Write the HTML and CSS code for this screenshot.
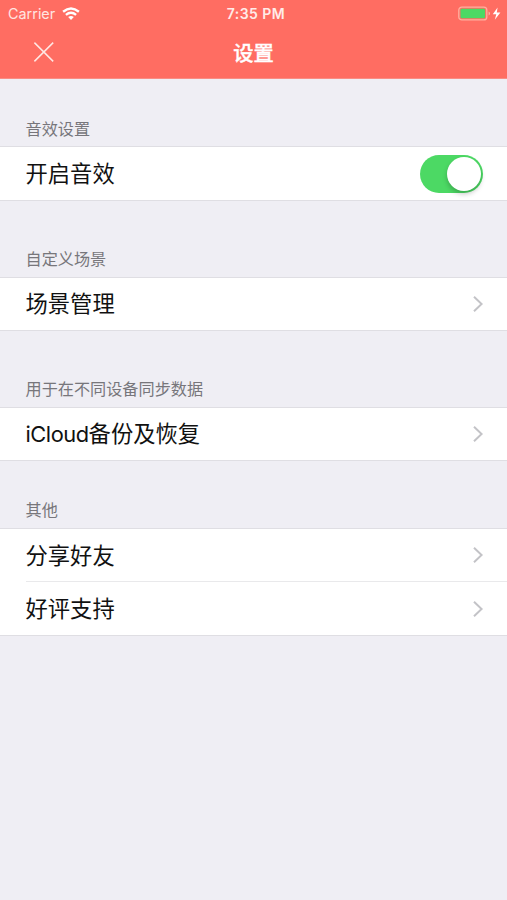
FILE: index.html
```html
<!DOCTYPE html>
<html lang="zh-CN">
<head>
<meta charset="utf-8">
<title>设置</title>
<link rel="stylesheet" href="styles.css">
</head>
<body>
<header class="header">
  <div class="status">
    <div class="carrier"><span class="carrier-name">Carrier</span>
      <svg class="wifi" width="18" height="14" viewBox="0 0 18 14" fill="none" stroke="#fff" stroke-width="2.4"><path d="M1.1 4.7Q9-1.7 16.9 4.7"/><path d="M3.9 7.9Q9 3.8 14.1 7.9"/><path d="M9 13 6.2 10.1Q9 7.9 11.8 10.1Z" fill="#fff" stroke="none"/></svg>
    </div>
    <time class="clock">7:35 PM</time>
    <svg class="battery" width="44" height="16" viewBox="0 0 44 16"><rect x=".8" y="1.1" width="28" height="12.8" rx="3" fill="none" stroke="#ffb09f" stroke-width="1.3"/><rect x="2.5" y="2.7" width="24.6" height="9.6" rx="1.3" fill="#4cd964"/><path d="M30.6 5.5Q32 6 32 7.5T30.6 9.5Z" fill="#ffb3a9"/><path d="M39.6 1.4 34.8 8.2H38.3L36.8 13.8 42.4 6.5H38.8Z" fill="#fff"/></svg>
  </div>
  <nav class="navbar">
    <svg class="close" width="22" height="22" viewBox="0 0 22 22" fill="none" stroke="#ffe7e3" stroke-width="1.5"><path d="M1.4 .6 20.2 19.4M20.2 .6 1.4 19.4"/></svg>
    <h1 class="title">设置</h1>
  </nav>
</header>
<main>
  <section class="section first">
    <h2 class="label">音效设置</h2>
    <div class="group"><div class="row"><span>开启音效</span><div class="switch"><div class="knob"></div></div></div></div>
  </section>
  <section class="section second">
    <h2 class="label">自定义场景</h2>
    <div class="group"><div class="row"><span>场景管理</span><svg class="chevron" viewBox="0 0 10 18"><path d="M1 1.8 8.6 9 1 16.2"/></svg></div></div>
  </section>
  <section class="section">
    <h2 class="label">用于在不同设备同步数据</h2>
    <div class="group"><div class="row"><span><span class="latin">iCloud</span>备份及恢复</span><svg class="chevron" viewBox="0 0 10 18"><path d="M1 1.8 8.6 9 1 16.2"/></svg></div></div>
  </section>
  <section class="section last">
    <h2 class="label">其他</h2>
    <div class="group"><div class="row"><span>分享好友</span><svg class="chevron" viewBox="0 0 10 18"><path d="M1 1.8 8.6 9 1 16.2"/></svg></div><div class="row divided"><span>好评支持</span><svg class="chevron" viewBox="0 0 10 18"><path d="M1 1.8 8.6 9 1 16.2"/></svg></div></div>
  </section>
</main>
</body>
</html>
```
FILE: styles.css
```css
* { box-sizing: border-box; }
body { margin: 0; min-height: 900px; background: #efeef4; color: #111; font-family: Inter, "Noto Sans CJK SC", sans-serif; }
.header { height: 79px; background: #ff6d62; color: #fff; border-bottom: 1px solid #f98d84; }
.status { height: 27px; display: grid; grid-template-columns: 1fr auto 1fr; align-items: center; padding: 0 5px 0 8px; }
.carrier { display: flex; align-items: center; gap: 7px; font-size: 14.4px; color: #ffe5e1; }
.clock { font-size: 14px; font-weight: 600; letter-spacing: .45px; color: #ffebe8; padding-left: 2px; }
.battery { justify-self: end; }
.navbar { height: 51px; display: grid; grid-template-columns: 1fr auto 1fr; align-items: center; }
.close { margin-left: 33px; }
.title { margin: 0; padding-top: 2px; font-size: 20.3px; line-height: 30px; font-weight: 500; -webkit-text-stroke: .35px; }
.section { height: 130px; display: flex; flex-direction: column; justify-content: flex-end; }
.first { height: 122px; }
.first .row { height: 53px; }
.first .label { margin-bottom: 5px; }
.last { height: 175px; }
.label { margin: 0 0 6px 25.5px; font-size: 16.15px; line-height: 24px; font-weight: 400; color: #77767b; }
.group { background: #fff; border-top: 1px solid #dfdee3; border-bottom: 1px solid #dfdee3; }
.row { height: 52px; display: flex; align-items: center; justify-content: space-between; padding-right: 24.5px; margin-left: 25.5px; font-size: 22.3px; line-height: 32px; }
.latin { font-size: 21.8px; letter-spacing: -.45px; }
.last .row span { position: relative; top: .5px; }
.divided { border-top: 1px solid #e9e9eb; height: 54px; }
.switch { width: 63px; height: 38px; border-radius: 19px; background: #4cd964; display: flex; align-items: center; justify-content: flex-end; padding-right: 2px; }
.knob { width: 34px; height: 34px; border-radius: 50%; background: #fff; box-shadow: 0 3px 5px rgba(0,0,0,.22); }
.chevron { width: 10px; height: 18px; fill: none; stroke: #c3c3c7; stroke-width: 2; }
```
